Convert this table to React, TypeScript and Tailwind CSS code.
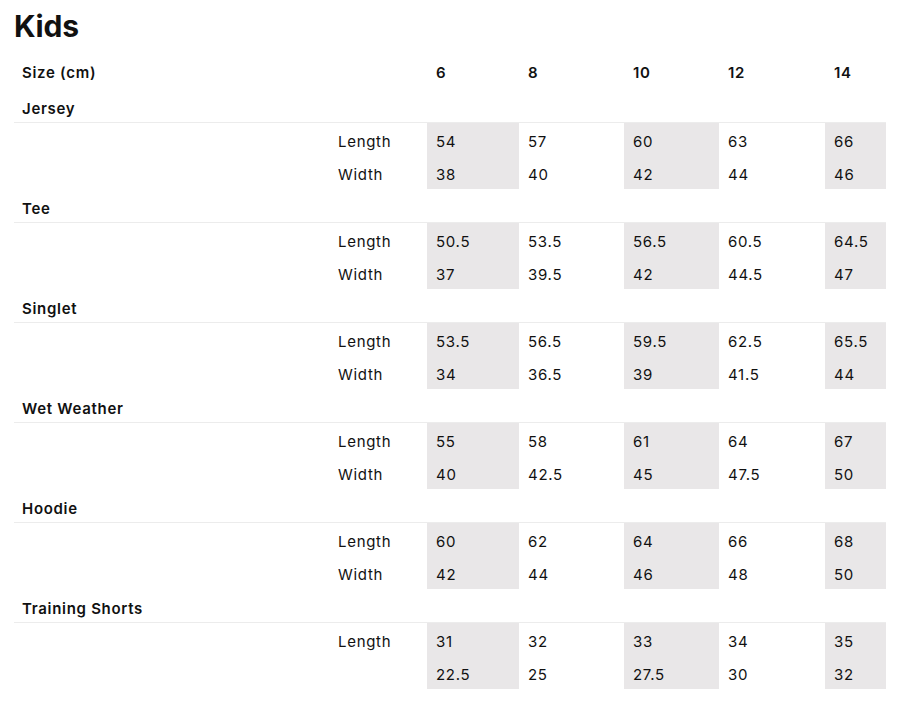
const sizes = ["6", "8", "10", "12", "14"];

type Garment = {
  name: string;
  rows: { label: string; values: string[] }[];
};

const garments: Garment[] = [
  {
    name: "Jersey",
    rows: [
      { label: "Length", values: ["54", "57", "60", "63", "66"] },
      { label: "Width", values: ["38", "40", "42", "44", "46"] },
    ],
  },
  {
    name: "Tee",
    rows: [
      { label: "Length", values: ["50.5", "53.5", "56.5", "60.5", "64.5"] },
      { label: "Width", values: ["37", "39.5", "42", "44.5", "47"] },
    ],
  },
  {
    name: "Singlet",
    rows: [
      { label: "Length", values: ["53.5", "56.5", "59.5", "62.5", "65.5"] },
      { label: "Width", values: ["34", "36.5", "39", "41.5", "44"] },
    ],
  },
  {
    name: "Wet Weather",
    rows: [
      { label: "Length", values: ["55", "58", "61", "64", "67"] },
      { label: "Width", values: ["40", "42.5", "45", "47.5", "50"] },
    ],
  },
  {
    name: "Hoodie",
    rows: [
      { label: "Length", values: ["60", "62", "64", "66", "68"] },
      { label: "Width", values: ["42", "44", "46", "48", "50"] },
    ],
  },
  {
    name: "Training Shorts",
    rows: [
      { label: "Length", values: ["31", "32", "33", "34", "35"] },
      { label: "", values: ["22.5", "25", "27.5", "30", "32"] },
    ],
  },
];

const cols = "grid grid-cols-[315px_98px_92px_105px_95px_106px_61px]";

const SizeChart = () => {
  return (
    <div className="pl-[14px] pt-[6px] text-[#111] font-['Inter','Liberation_Sans',sans-serif]">
      <h1 className="text-[30px] font-bold leading-[40px] tracking-[-0.2px]">Kids</h1>

      {/* header row */}
      <div className={`${cols} h-[35px] mt-[8px] items-center text-[15px] font-semibold tracking-[0.7px]`}>
        <div className="pl-[8px] pt-[4px]">Size (cm)</div>
        <div />
        {sizes.map(s => (
          <div key={s} className="pl-[9px] pt-[4px]">{s}</div>
        ))}
      </div>

      {garments.map(g => (
        <div key={g.name}>
          {/* garment name */}
          <div className="h-[34px] w-[872px] flex items-center pl-[8px] pt-[7px] border-b border-[#ececec] text-[15px] font-semibold tracking-[0.7px]">
            {g.name}
          </div>
          {g.rows.map((r, i) => (
            <div key={i} className={`${cols} h-[33px] text-[15px] tracking-[0.7px]`}>
              <div />
              <div className="pl-[9px] pt-[5px] flex items-center">{r.label}</div>
              {r.values.map((v, j) => (
                <div
                  key={j}
                  className={`pl-[9px] pt-[5px] flex items-center ${j % 2 === 0 ? "bg-[#e9e7e8]" : ""}`}
                >
                  {v}
                </div>
              ))}
            </div>
          ))}
        </div>
      ))}
    </div>
  );
};

export default function App() {
  return (
    <div className="w-[920px] h-[702px] bg-white overflow-hidden">
      <SizeChart />
    </div>
  );
}
